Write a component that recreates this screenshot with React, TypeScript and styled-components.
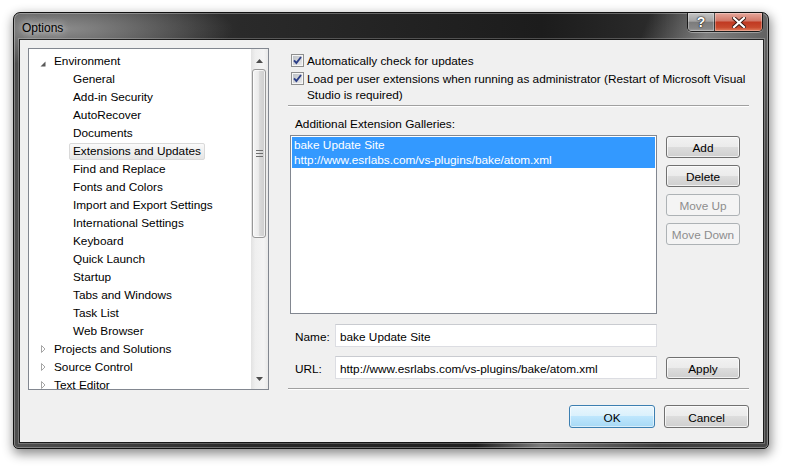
import React from 'react';
import styled, { createGlobalStyle } from 'styled-components';

const FONT = `"Liberation Sans", Arial, sans-serif`;
const SIZE = '11.8px';

const GlobalStyle = createGlobalStyle`
  html, body { margin: 0; padding: 0; background: #ffffff; }
  body { font-family: ${FONT}; font-size: ${SIZE}; color: #000; }
  * { box-sizing: border-box; }
`;

const Desktop = styled.div`
  width: 789px;
  height: 466px;
  padding: 12px 0 0 13px;
  overflow: hidden;
  background: #ffffff;
`;

const Window = styled.div`
  width: 756px;
  height: 437px;
  display: flex;
  flex-direction: column;
  padding: 0 5px 6px 6px;
  border: 1px solid #121212;
  border-radius: 7px 7px 5px 5px;
  background:
    radial-gradient(ellipse 170px 36px at 50px 16px, rgba(150, 150, 150, 0.85), rgba(150, 150, 150, 0) 100%),
    linear-gradient(112deg, rgba(140, 140, 140, 0) 0 590px, rgba(140, 140, 140, 0.85) 650px, rgba(120, 120, 120, 0.7) 700px, rgba(90, 90, 90, 0.4) 760px),
    linear-gradient(to right, #505050, #2a2a2a 30%, #1c1c1c 70%, #3a3a3a);
  box-shadow: inset 0 0 0 1px rgba(255, 255, 255, 0.3), 1px 4px 11px 1px rgba(0, 0, 0, 0.45);
`;

const TitleBar = styled.div`
  height: 27px;
  display: flex;
  justify-content: space-between;
  align-items: flex-start;
`;

const Title = styled.div`
  margin: 7px 0 0 2px;
  line-height: 16px;
  font-size: 12px;
  color: #000;
  text-shadow: 0 0 6px rgba(255, 255, 255, 0.85), 0 0 12px rgba(255, 255, 255, 0.6), 0 0 18px rgba(255, 255, 255, 0.4);
`;

const CaptionGroup = styled.div`
  display: flex;
  height: 19px;
  border: 1px solid rgba(0, 0, 0, 0.75);
  border-top: none;
  border-radius: 0 0 5px 5px;
  overflow: hidden;
  box-shadow: 0 1px 0 rgba(255, 255, 255, 0.35);
`;

const CaptionButton = styled.div<{ $variant: 'help' | 'close' }>`
  width: ${(p) => (p.$variant === 'help' ? 27 : 47)}px;
  height: 100%;
  display: flex;
  align-items: center;
  justify-content: center;
  box-shadow: inset 0 0 0 1px rgba(255, 255, 255, 0.3);
  border-right: ${(p) => (p.$variant === 'help' ? '1px solid rgba(0,0,0,0.6)' : 'none')};
  background: ${(p) =>
    p.$variant === 'help'
      ? 'linear-gradient(#c4c4c4, #a4a4a4 45%, #7c7c7c 52%, #868686 85%, #a0a0a0)'
      : 'linear-gradient(#e6a79b, #d27a6a 42%, #c13a22 52%, #c84a2e 80%, #e2805f)'};
`;

const HelpGlyph = styled.span`
  font-family: ${FONT};
  font-weight: bold;
  font-size: 14px;
  line-height: 14px;
  color: #fff;
  text-shadow: 0 0 1px #222, 0 0 1px #222, 0 0 2px #333;
`;

const Client = styled.div`
  flex: 1;
  background: #f0f0f0;
  box-shadow: 0 0 0 1px rgba(0, 0, 0, 0.75), 0 0 0 2px rgba(255, 255, 255, 0.22);
  padding: 8px 14px 14px 8px;
  display: flex;
  flex-direction: column;
`;

const Main = styled.div`
  display: flex;
  height: 342px;
  gap: 19px;
`;

/* ---------- Tree ---------- */

const Tree = styled.div`
  width: 241px;
  height: 342px;
  flex: none;
  border: 1px solid #828790;
  background: #fff;
  display: flex;
  overflow: hidden;
`;

const TreeList = styled.div`
  flex: 1;
  padding-top: 3px;
  overflow: hidden;
`;

const TreeRow = styled.div<{ $level: number }>`
  height: 18px;
  display: flex;
  align-items: center;
  padding-left: ${(p) => (p.$level === 0 ? 7 : 26)}px;
  white-space: nowrap;
`;

const ExpanderSlot = styled.span`
  width: 14px;
  height: 18px;
  flex: none;
  display: flex;
  align-items: center;
`;

const TreeLabel = styled.span<{ $selected?: boolean }>`
  height: 17px;
  line-height: 15px;
  padding: 0 3px;
  border: 1px solid ${(p) => (p.$selected ? '#d9d9d9' : 'transparent')};
  border-radius: 2px;
  background: ${(p) => (p.$selected ? 'linear-gradient(#fafafa, #e5e5e5)' : 'transparent')};
`;

const ScrollBar = styled.div`
  width: 17px;
  flex: none;
  display: flex;
  flex-direction: column;
  background: linear-gradient(to right, #e2e2e2, #efefef 25%, #f4f4f4 75%, #e9e9e9);
`;

const ScrollArrow = styled.div<{ $dir: 'up' | 'down' }>`
  height: 20px;
  flex: none;
  display: flex;
  justify-content: center;
  align-items: ${(p) => (p.$dir === 'up' ? 'flex-start' : 'flex-end')};
  padding: ${(p) => (p.$dir === 'up' ? '10px 0 0' : '0 0 8px')};
`;

const ScrollTrack = styled.div`
  flex: 1;
  padding: 0 2px 0 1px;
`;

const Thumb = styled.div`
  height: 169px;
  border: 1px solid #979797;
  border-radius: 3px;
  background: linear-gradient(to right, #f5f5f5, #ebebeb 45%, #d9d9d9 55%, #cdcdcd);
  box-shadow: inset 0 0 0 1px rgba(255, 255, 255, 0.7);
  display: flex;
  align-items: center;
  justify-content: center;
`;

/* ---------- Right panel ---------- */

const RightPanel = styled.div`
  flex: 1;
  display: flex;
  flex-direction: column;
`;

const CheckRow = styled.div<{ $first?: boolean }>`
  display: flex;
  align-items: flex-start;
  gap: 3px;
  margin: ${(p) => (p.$first ? '5px 0 0 3px' : '2px 0 0 3px')};
  line-height: 16px;
  white-space: nowrap;
`;

const CheckBox = styled.span`
  width: 13px;
  height: 13px;
  flex: none;
  margin-top: 1px;
  border: 1px solid #8e8f8f;
  background: linear-gradient(135deg, #b7bcc2, #eeeeef);
  box-shadow: inset 0 0 0 1px #f6f6f6;
  display: flex;
  align-items: center;
  justify-content: center;
`;

const Separator = styled.div<{ $mt: number }>`
  margin-top: ${(p) => p.$mt}px;
  height: 2px;
  border-top: 1px solid #a0a0a0;
  border-bottom: 1px solid #ffffff;
  flex: none;
`;

const SectionLabel = styled.div`
  margin: 9px 0 0 7px;
  line-height: 16px;
`;

const ListRow = styled.div`
  display: flex;
  margin: 3px 0 0 2px;
  gap: 9px;
`;

const ListBox = styled.div`
  width: 367px;
  height: 179px;
  border: 1px solid #828790;
  background: #fff;
  padding: 1px;
`;

const ListItem = styled.div<{ $selected?: boolean }>`
  background: ${(p) => (p.$selected ? '#3399ff' : 'transparent')};
  color: ${(p) => (p.$selected ? '#fff' : '#000')};
  padding: 1px 2px 0;
  line-height: 15px;
  white-space: nowrap;
`;

const ButtonColumn = styled.div`
  display: flex;
  flex-direction: column;
  gap: 7px;
  padding-top: 1px;
`;

const Button = styled.button<{ $w?: number; $h?: number; $default?: boolean }>`
  width: ${(p) => p.$w ?? 74}px;
  height: ${(p) => p.$h ?? 22}px;
  flex: none;
  padding: 2px 0 0;
  font-family: ${FONT};
  font-size: ${SIZE};
  color: #000;
  border-radius: 3px;
  border: 1px solid ${(p) => (p.$default ? '#3c7fb1' : '#707070')};
  background: ${(p) =>
    p.$default
      ? 'linear-gradient(#eaf6fd, #d9f0fc 50%, #bee6fd 50%, #a7d9f5)'
      : 'linear-gradient(#f2f2f2, #ebebeb 50%, #dddddd 50%, #cfcfcf)'};
  box-shadow: inset 0 0 0 1px ${(p) => (p.$default ? 'rgba(255,255,255,0.55)' : 'rgba(255,255,255,0.7)')};

  &:disabled {
    border-color: #adb2b5;
    background: #f4f4f4;
    color: #8d8d8d;
    box-shadow: none;
  }
`;

const FieldRow = styled.div<{ $mt: number }>`
  display: flex;
  align-items: center;
  margin-top: ${(p) => p.$mt}px;
`;

const FieldLabel = styled.span`
  width: 40px;
  margin-left: 7px;
  padding-top: 3px;
  flex: none;
`;

const TextBox = styled.div`
  width: 322px;
  height: 23px;
  flex: none;
  border: 1px solid #dcdde2;
  border-top-color: #c9cbd0;
  background: #fff;
  padding: 2px 0 0 4px;
  line-height: 21px;
  white-space: nowrap;
  overflow: hidden;
  margin-right: 9px;
`;

const Footer = styled.div`
  display: flex;
  justify-content: flex-end;
  gap: 9px;
  margin-top: 15px;
`;

/* ---------- Icons ---------- */

const ExpandedIcon = () => (
  <svg width="14" height="18" viewBox="0 0 14 18">
    <path d="M9.5 9.5 L9.5 14.5 L4.5 14.5 Z" fill="#595959" />
  </svg>
);

const CollapsedIcon = () => (
  <svg width="14" height="18" viewBox="0 0 14 18">
    <path d="M5.5 5.5 L5.5 12.5 L9 9 Z" fill="#fff" stroke="#a6a6a6" strokeWidth="1" />
  </svg>
);

const CheckMark = () => (
  <svg width="9" height="9" viewBox="0 0 9 9">
    <path d="M1 4.3 L3.4 7 L8 1" fill="none" stroke="#2c3f88" strokeWidth="1.9" strokeLinejoin="miter" />
  </svg>
);

const CloseGlyph = () => (
  <svg width="14" height="11" viewBox="0 0 14 11">
    <path d="M2 1 L12 10 M12 1 L2 10" stroke="#3a1a14" strokeWidth="4" strokeLinecap="square" />
    <path d="M2 1 L12 10 M12 1 L2 10" stroke="#ffffff" strokeWidth="2.2" strokeLinecap="square" />
  </svg>
);

const UpArrow = () => (
  <svg width="7" height="4" viewBox="0 0 7 4">
    <path d="M0 4 L3.5 0 L7 4 Z" fill="#4d4d4d" />
  </svg>
);

const DownArrow = () => (
  <svg width="7" height="4" viewBox="0 0 7 4">
    <path d="M0 0 L3.5 4 L7 0 Z" fill="#4d4d4d" />
  </svg>
);

const Grip = () => (
  <svg width="7" height="7" viewBox="0 0 7 7">
    <path d="M0 0.5 H7 M0 3.5 H7 M0 6.5 H7" stroke="#6f6f6f" strokeWidth="1" />
  </svg>
);

/* ---------- Data ---------- */

type Node = { label: string; level: number; exp?: 'open' | 'closed'; selected?: boolean };

const nodes: Node[] = [
  { label: 'Environment', level: 0, exp: 'open' },
  { label: 'General', level: 1 },
  { label: 'Add-in Security', level: 1 },
  { label: 'AutoRecover', level: 1 },
  { label: 'Documents', level: 1 },
  { label: 'Extensions and Updates', level: 1, selected: true },
  { label: 'Find and Replace', level: 1 },
  { label: 'Fonts and Colors', level: 1 },
  { label: 'Import and Export Settings', level: 1 },
  { label: 'International Settings', level: 1 },
  { label: 'Keyboard', level: 1 },
  { label: 'Quick Launch', level: 1 },
  { label: 'Startup', level: 1 },
  { label: 'Tabs and Windows', level: 1 },
  { label: 'Task List', level: 1 },
  { label: 'Web Browser', level: 1 },
  { label: 'Projects and Solutions', level: 0, exp: 'closed' },
  { label: 'Source Control', level: 0, exp: 'closed' },
  { label: 'Text Editor', level: 0, exp: 'closed' },
];

export default function App() {
  return (
    <Desktop>
      <GlobalStyle />
      <Window>
        <TitleBar>
          <Title>Options</Title>
          <CaptionGroup>
            <CaptionButton $variant="help">
              <HelpGlyph>?</HelpGlyph>
            </CaptionButton>
            <CaptionButton $variant="close">
              <CloseGlyph />
            </CaptionButton>
          </CaptionGroup>
        </TitleBar>
        <Client>
          <Main>
            <Tree>
              <TreeList>
                {nodes.map((n) => (
                  <TreeRow key={n.label} $level={n.level}>
                    <ExpanderSlot>
                      {n.exp === 'open' && <ExpandedIcon />}
                      {n.exp === 'closed' && <CollapsedIcon />}
                    </ExpanderSlot>
                    <TreeLabel $selected={n.selected}>{n.label}</TreeLabel>
                  </TreeRow>
                ))}
              </TreeList>
              <ScrollBar>
                <ScrollArrow $dir="up">
                  <UpArrow />
                </ScrollArrow>
                <ScrollTrack>
                  <Thumb>
                    <Grip />
                  </Thumb>
                </ScrollTrack>
                <ScrollArrow $dir="down">
                  <DownArrow />
                </ScrollArrow>
              </ScrollBar>
            </Tree>

            <RightPanel>
              <CheckRow $first>
                <CheckBox>
                  <CheckMark />
                </CheckBox>
                <span>Automatically check for updates</span>
              </CheckRow>
              <CheckRow>
                <CheckBox>
                  <CheckMark />
                </CheckBox>
                <span>
                  Load per user extensions when running as administrator (Restart of Microsoft Visual
                  <br />
                  Studio is required)
                </span>
              </CheckRow>
              <Separator $mt={2} />
              <SectionLabel>Additional Extension Galleries:</SectionLabel>
              <ListRow>
                <ListBox>
                  <ListItem $selected>
                    bake Update Site
                    <br />
                    http://www.esrlabs.com/vs-plugins/bake/atom.xml
                  </ListItem>
                </ListBox>
                <ButtonColumn>
                  <Button>Add</Button>
                  <Button>Delete</Button>
                  <Button disabled>Move Up</Button>
                  <Button disabled>Move Down</Button>
                </ButtonColumn>
              </ListRow>
              <FieldRow $mt={10}>
                <FieldLabel>Name:</FieldLabel>
                <TextBox>bake Update Site</TextBox>
              </FieldRow>
              <FieldRow $mt={9}>
                <FieldLabel>URL:</FieldLabel>
                <TextBox>http://www.esrlabs.com/vs-plugins/bake/atom.xml</TextBox>
                <Button>Apply</Button>
              </FieldRow>
              <Separator $mt={9} />
            </RightPanel>
          </Main>
          <Footer>
            <Button $w={86} $h={23} $default>
              OK
            </Button>
            <Button $w={85} $h={23}>
              Cancel
            </Button>
          </Footer>
        </Client>
      </Window>
    </Desktop>
  );
}
